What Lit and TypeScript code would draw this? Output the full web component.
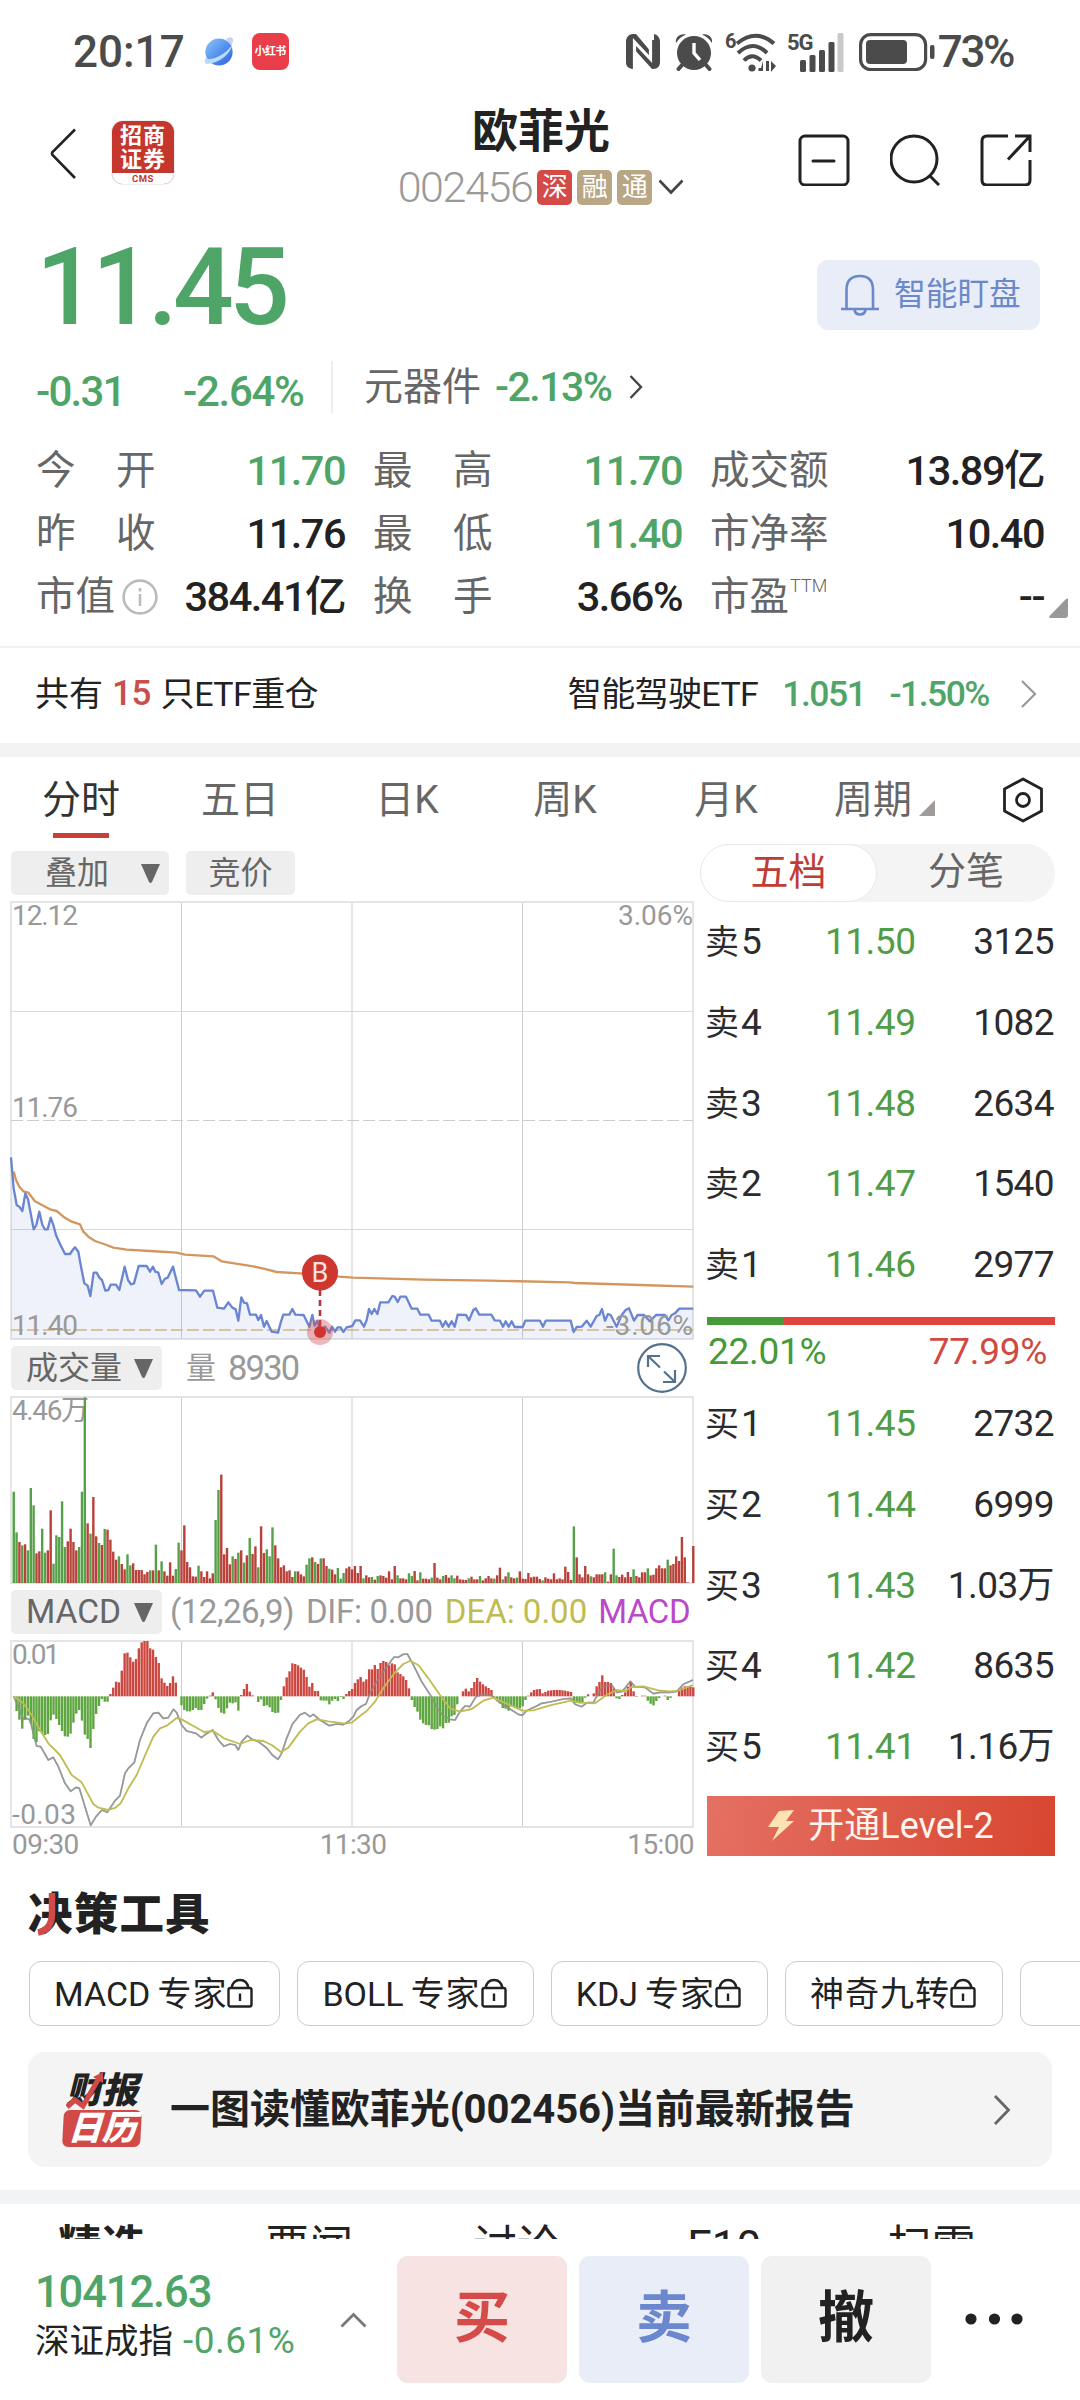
import { LitElement, html, css, svg } from "lit";
import { customElement } from "lit/decorators.js";

/* ---------- chart data (units of 1/3 px, one entry per minute) ---------- */

// positive = rising minute (red), negative = falling minute (green)
const VOLUME = [
  -274, -152, 123, -113, 116, -98, -285, -233, 89, 95, -163, -91, 98, 218, -58, -143, -138, -245, -108, 125,
  163, 123, 98, -108, -274, -557, 179, -148, 258, 140, -120, 114, -162, 160, 130, 94, 70, -80, 57, 41,
  -86, -53, 59, 39, 39, 39, 26, 33, -38, 38, -115, 38, -65, 35, 22, 62, 22, -42, -121, 98,
  173, 63, 47, 20, 19, -52, 35, 18, 35, 14, 29, -189, -279, 325, 86, 105, 56, -80, 72, -91,
  98, -61, 83, -135, 87, 110, -47, 170, 90, -101, -80, -167, 113, 74, 47, 53, 35, 38, 18, -35,
  35, 26, 20, -55, -74, 77, -63, 57, -74, 74, 51, -43, 40, 26, -45, -13, -30, 44, 49, 41,
  51, 30, 51, -14, 23, 17, -18, 10, -21, 23, 21, 16, 35, 11, 51, -23, 14, 14, 11, -29,
  -21, 36, 8, -32, 13, 13, 11, -16, 60, 16, 11, -21, 24, 16, -23, -14, 22, 11, 10, 9,
  -14, 19, 11, 11, -21, 8, 14, 21, 14, -13, 23, 46, -11, 20, -32, 17, 14, -16, 35, 13,
  12, 30, 17, 19, 19, 12, -8, 17, 13, 11, 29, 11, 14, 11, 49, 33, 9, -170, 77, 26,
  17, 51, 26, -20, 17, 26, 26, 26, -32, 4, 26, -103, -23, 18, 25, 17, 33, 18, -41, 21,
  17, 32, 32, -44, 23, 25, 44, 53, 44, 44, -70, 53, 57, 80, 66, 138, 77, 2, 0, 111,
];

const HISTOGRAM = [
  0, -44, -70, -97, -70, -58, -82, -128, -137, -105, -112, -116, -113, -72, -55, -68, -86, -104, -120, -121,
  -112, -79, -52, -41, -73, -115, -128, -155, -98, -53, -29, -8, -16, -16, 7, 26, 44, 42, 77, 129,
  131, 117, 104, 112, 144, 162, 166, 166, 144, 140, 118, 100, 54, 41, 31, 40, 60, 41, 0, -27,
  -41, -45, -45, -41, -35, -41, -41, -23, -7, 2, 12, -9, -35, -49, -52, -36, -19, -21, -18, -43,
  4, 22, 37, 14, 3, 0, -17, -9, -29, -27, -33, -47, -50, -49, -11, 30, 57, 75, 99, 97,
  93, 86, 80, 58, 29, 40, 16, 16, -12, -13, -13, -24, -13, -8, -14, -2, -8, 7, 16, 22,
  40, 51, 58, 44, 51, 81, 81, 94, 82, 100, 106, 103, 93, 99, 96, 72, 67, 60, 49, 24,
  -11, -32, -46, -70, -81, -86, -87, -98, -100, -98, -90, -96, -80, -79, -60, -56, -24, 0, 15, 23,
  15, 25, 43, 55, 44, 36, 30, 25, 19, -4, -13, -21, -35, -37, -43, -30, -31, -35, -36, -30,
  -11, 2, 12, 19, 21, 22, 9, 13, 17, 18, 19, 19, 19, 18, 17, 15, 13, -19, -20, -21,
  -20, -4, 6, 0, 9, 30, 43, 63, 43, 43, 40, 24, -6, -8, 4, 12, 29, 43, 15, -2,
  0, 2, 2, -13, -22, -27, -14, -5, 0, 2, -11, -5, 0, 0, 18, 26, 30, 31, 30, 27,
];

const PRICE =
  "33,82 41,175 50,225 58,230 67,243 76,190 84,208 92,250 101,298 109,285 118,245 127,285 135,298 143,298 152,263 160,285 168,315 180,342 195,372 210,372 218,360 225,352 235,365 243,410 253,460 263,467 271,498 281,428 290,428 298,443 306,450 316,482 325,480 332,464 348,464 358,480 374,410 384,450 393,463 402,460 416,408 440,408 450,425 459,410 466,425 475,428 485,462 494,447 503,443 519,410 537,480 588,481 600,500 613,482 639,482 652,533 672,536 685,517 697,533 707,538 715,572 724,502 732,518 741,520 750,554 768,554 775,570 783,555 792,590 800,573 815,605 834,608 843,575 850,554 868,554 877,537 886,554 911,555 928,590 937,555 944,587 952,573 960,600 975,590 988,608 996,590 1005,605 1013,592 1022,592 1030,606 1040,592 1057,588 1066,571 1080,571 1092,590 1100,570 1107,537 1115,552 1123,537 1132,552 1141,517 1165,517 1177,498 1184,500 1193,516 1201,500 1218,500 1235,536 1252,536 1261,554 1286,554 1295,572 1320,572 1328,590 1337,574 1346,590 1355,574 1364,590 1373,554 1398,555 1407,571 1420,540 1427,535 1438,554 1474,554 1484,571 1500,572 1509,590 1517,574 1526,590 1535,574 1544,591 1568,591 1576,572 1620,572 1629,590 1637,572 1712,572 1721,606 1730,591 1745,590 1760,572 1772,590 1790,558 1798,555 1806,537 1815,572 1824,552 1832,555 1850,590 1865,555 1877,540 1887,535 1902,572 1913,555 1932,555 1950,574 1968,555 1995,555 2005,571 2015,555 2025,550 2038,536 2080,536";

const AVERAGE =
  "41,125 48,150 58,170 70,184 85,188 105,214 130,227 150,238 170,243 190,260 215,275 240,283 250,305 265,320 285,333 320,345 340,353 380,359 450,363 530,368 555,374 640,379 665,394 760,409 800,418 830,426 900,430 960,436 1060,443 1270,449 1470,452 1710,457 1725,459 1920,465 2080,470";

const DIF =
  "41,949 55,980 70,1018 80,1015 90,1020 100,1060 110,1098 122,1100 145,1140 160,1132 175,1160 195,1210 212,1234 228,1222 238,1225 255,1280 272,1336 288,1310 306,1290 322,1297 345,1262 360,1247 375,1180 385,1165 403,1147 420,1080 440,1030 460,1000 475,998 490,1015 505,1013 520,988 530,998 545,1035 560,1053 588,1060 604,1073 618,1062 638,1050 655,1080 672,1099 690,1092 706,1095 715,1110 725,1085 742,1067 757,1078 775,1085 800,1104 817,1125 834,1138 845,1120 860,1075 877,1033 900,1004 914,998 930,1010 940,1003 960,1020 988,1037 1010,1032 1030,1034 1047,1023 1060,1010 1070,990 1085,978 1098,972 1110,940 1130,905 1150,875 1175,840 1183,831 1195,832 1210,823 1222,822 1235,845 1265,905 1294,950 1312,985 1330,1008 1350,1018 1365,1020 1380,995 1395,978 1410,980 1428,950 1445,944 1475,946 1490,960 1510,975 1535,990 1555,1003 1567,1006 1580,992 1610,978 1625,970 1650,966 1690,957 1713,955 1725,973 1745,980 1762,968 1780,968 1795,940 1806,921 1835,915 1850,937 1865,935 1875,925 1891,904 1905,920 1935,922 1960,941 1980,937 2010,937 2030,934 2050,913 2079,900";

const DEA =
  "41,949 70,970 95,1005 120,1050 145,1090 180,1125 215,1185 245,1207 260,1235 280,1272 295,1283 325,1290 345,1284 362,1270 385,1225 410,1185 440,1115 460,1070 480,1045 500,1037 530,1014 545,1018 580,1038 612,1056 640,1053 672,1075 720,1092 752,1080 790,1083 815,1095 843,1116 865,1103 900,1055 925,1030 950,1018 985,1024 1035,1031 1055,1028 1075,1012 1100,993 1125,965 1150,925 1185,877 1210,852 1230,843 1255,855 1285,895 1320,945 1350,985 1380,995 1415,987 1450,962 1480,953 1520,971 1567,992 1600,991 1650,976 1713,962 1740,968 1785,970 1820,945 1850,930 1875,934 1895,921 1930,919 1975,931 2010,934 2035,932 2079,915";

const STEP = 8.53;

const bars = (data: number[], base: number, signedAxis: boolean, red: string, green: string) =>
  data.map((v, i) => {
    const h = Math.abs(v);
    const y = signedAxis && v < 0 ? base : base - h;
    return svg`<rect x=${37.6 + STEP * i} y=${y} width="7.2" height=${h} fill=${v < 0 ? green : red}></rect>`;
  });

const FONT = css`"Roboto", "Noto Sans CJK SC", sans-serif`;

/* ---------- status bar ---------- */

@customElement("status-bar")
class StatusBar extends LitElement {
  static styles = css`
    :host {
      display: flex;
      align-items: center;
      height: 103px;
      box-sizing: border-box;
      padding: 0 67px 0 73px;
      font: 500 44px/44px ${FONT};
      color: #4b4b4b;
    }
    svg { display: block; flex: none; }
    .globe { margin-left: 19px; }
    .app {
      margin-left: 18px;
      width: 37px;
      height: 37px;
      border-radius: 8px;
      background: #e93e49;
      color: #fff;
      font: 700 11px/37px ${FONT};
      letter-spacing: -0.6px;
      text-align: center;
    }
    .grow { flex: 1; }
    .alarm { margin-left: 15px; }
    .wifi { margin-left: 12px; }
    .signal { margin-left: 10px; }
    .battery { margin-left: 14px; }
    .level { margin-left: 3px; letter-spacing: -2.4px; }
    .tiny { font: 700 20px ${FONT}; fill: #4b4b4b; }
    .net { font: 700 22px ${FONT}; fill: #4b4b4b; letter-spacing: -1px; }
  `;
  render() {
    return html`
      <span>20:17</span>
      <svg class="globe" width="30" height="32" viewBox="0 0 30 32">
        <defs>
          <linearGradient id="g" x1="0" y1="0" x2="1" y2="1">
            <stop offset="0" stop-color="#8fc6f8" /><stop offset=".5" stop-color="#5593ee" /><stop offset="1" stop-color="#2e62dc" />
          </linearGradient>
        </defs>
        <path d="M22 3C26 0 30 1 29 5L27 12Z" fill="#c9d4f2" />
        <circle cx="15" cy="16" r="13.6" fill="url(#g)" />
        <path d="M28 9C27 17 16 27 3 28C0 28 0 24 2 21C2 26 19 22 28 9Z" fill="#b9dcfb" />
      </svg>
      <span class="app">小红书</span>
      <span class="grow"></span>
      <svg width="34" height="36" viewBox="0 0 34 36">
        <path d="M7 0H10L26 19V6H28V0C32 1 34 4 34 8V28C34 32 32 35 27 35H26L8 15V35H6C2 34 0 32 0 28V8C0 3 3 0 7 0Z" fill="#4b4b4b" />
        <path d="M8.5 35V8L24.500 25V1" fill="none" stroke="#fff" stroke-width="3.200" />
      </svg>
      <svg class="alarm" width="38" height="38" viewBox="0 0 38 38">
        <circle cx="19" cy="20" r="17" fill="#4b4b4b" />
        <path d="M7 32L3.500 36M31 32L34.500 36" stroke="#4b4b4b" stroke-width="4" stroke-linecap="round" />
        <path d="M1 10C0 4 5 0 11 1.500C7 3 3.500 6 1 10ZM37 10C38 4 33 0 27 1.500C31 3 34.500 6 37 10Z" fill="#4b4b4b" />
        <path d="M19 10V20L25 27" fill="none" stroke="#fff" stroke-width="3.400" />
      </svg>
      <svg class="wifi" width="52" height="42" viewBox="0 0 52 42">
        <text class="tiny" x="0" y="17">6</text>
        <g fill="none" stroke="#4b4b4b" stroke-width="4">
          <path d="M12 12.500Q31 -3 49 12.500" /><path d="M13 22Q28 8 42 22" /><path d="M19 29.500Q27 21 36 29.500" />
        </g>
        <circle cx="27" cy="37" r="3.600" fill="#4b4b4b" />
        <path d="M38 30V40H33.500V37H36ZM44 30V40H41V30ZM46 30L51 35L46 41Z" fill="#4b4b4b" />
      </svg>
      <svg class="signal" width="58" height="42" viewBox="0 0 58 42">
        <text class="net" x="0" y="19">5G</text>
        <g fill="#4b4b4b">
          <rect x="13" y="29" width="6" height="12" rx="1.500" /><rect x="22.500" y="24" width="6" height="17" rx="1.500" />
          <rect x="32" y="19" width="6" height="22" rx="1.500" /><rect x="41.500" y="11" width="6" height="30" rx="1.500" />
        </g>
        <rect x="50.500" y="2" width="6" height="39" rx="1.500" fill="#c9c9c9" />
      </svg>
      <svg class="battery" width="76" height="38" viewBox="0 0 76 38">
        <rect x="1.600" y="1.600" width="65" height="35" rx="10" fill="none" stroke="#4b4b4b" stroke-width="3.200" />
        <rect x="7" y="7" width="41" height="24" rx="4" fill="#4b4b4b" />
        <rect x="71" y="12" width="4.500" height="14" rx="2" fill="#4b4b4b" />
      </svg>
      <span class="level">73%</span>
    `;
  }
}

/* ---------- title bar ---------- */

@customElement("title-bar")
class TitleBar extends LitElement {
  static styles = css`
    :host {
      display: grid;
      grid-template-columns: 1fr auto 1fr;
      height: 122px;
      box-sizing: border-box;
      padding: 0 48px 0 50px;
      font-family: ${FONT};
    }
    svg { display: block; flex: none; }
    .left { display: flex; gap: 36px; padding-top: 18px; align-items: flex-start; }
    .back { margin-top: 7px; }
    .logo {
      width: 62px;
      height: 63px;
      border-radius: 11px;
      overflow: hidden;
      background: #c5362d;
      color: #fff;
      font: 700 22px/24px ${FONT};
      letter-spacing: 1px;
      text-align: center;
      display: flex;
      flex-direction: column;
      justify-content: space-between;
      box-shadow: 0 0 0 1px #eee;
    }
    .logo-name { padding-top: 3px; }
    .cms { background: #fff; color: #c5362d; font: 700 9.500px/11px ${FONT}; letter-spacing: 0.5px; }
    .mid { display: flex; flex-direction: column; align-items: center; }
    .name { margin-top: 5px; font-size: 46px; line-height: 46px; font-weight: 700; color: #222; }
    .sub { display: flex; align-items: center; margin-top: 14px; height: 38px; }
    .code { font-size: 43px; line-height: 43px; color: #999; letter-spacing: -1.400px; margin-right: 5px; font-weight: 300; }
    .tag {
      width: 35px;
      height: 35px;
      margin-right: 5px;
      border-radius: 5px;
      background: #b9a684;
      color: #fff;
      font-size: 26px;
      line-height: 34px;
      text-align: center;
    }
    .tag.red { background: #d44a48; }
    .caret { margin-left: 1px; }
    .right { display: flex; justify-content: flex-end; gap: 40px; padding-top: 31px; }
  `;
  render() {
    return html`
      <div class="left">
        <svg class="back" width="26" height="52" viewBox="0 0 26 52"><path d="M25 1.500L2.500 24Q1.500 25.500 2.500 27L25 50" fill="none" stroke="#222" stroke-width="2.600" /></svg>
        <div class="logo"><div class="logo-name">招商<br />证券</div><div class="cms">CMS</div></div>
      </div>
      <div class="mid">
        <div class="name">欧菲光</div>
        <div class="sub">
          <span class="code">002456</span><span class="tag red">深</span><span class="tag">融</span><span class="tag">通</span>
          <svg class="caret" width="26" height="16" viewBox="0 0 26 16"><path d="M1.500 1.500L13 13.500L24.500 1.500" fill="none" stroke="#444" stroke-width="2.600" /></svg>
        </div>
      </div>
      <div class="right">
        <svg width="52" height="52" viewBox="0 0 52 52" fill="none" stroke="#222" stroke-width="3">
          <rect x="2" y="2" width="48" height="49" rx="5" /><path d="M15 27H36" stroke-linecap="round" />
        </svg>
        <svg width="50" height="52" viewBox="0 0 50 52" fill="none" stroke="#222" stroke-width="3">
          <circle cx="24" cy="25" r="23" /><path d="M40 42L49 51" />
        </svg>
        <svg width="52" height="52" viewBox="0 0 52 52" fill="none" stroke="#222" stroke-width="3">
          <path d="M28 2H7Q2 2 2 7V46Q2 51 7 51H45Q50 51 50 46V26" /><path d="M35 2H50V18M49 3L28 25.500" />
        </svg>
      </div>
    `;
  }
}

/* ---------- quote summary ---------- */

@customElement("quote-summary")
class QuoteSummary extends LitElement {
  static styles = css`
    :host { display: block; height: 421px; font-family: ${FONT}; color: #222; }
    svg { display: block; flex: none; }
    .top { display: flex; justify-content: space-between; height: 121px; padding: 0 40px 0 36px; }
    .price { margin-top: 9px; font-size: 107px; line-height: 107px; font-weight: 500; color: #4fa568; letter-spacing: -4.800px; }
    .watch {
      display: flex;
      align-items: center;
      width: 223px;
      height: 70px;
      margin-top: 35px;
      box-sizing: border-box;
      padding-left: 23px;
      gap: 14px;
      border-radius: 11px;
      background: #e8edf8;
      color: #6b88ca;
      font-size: 31.700px;
      line-height: 40px;
    }
    .changes { display: flex; align-items: center; height: 82px; padding-left: 36px; font-size: 42px; line-height: 42px; }
    .green { color: #4fa568; }
    .num { font-weight: 500; }
    .diff { width: 147px; letter-spacing: -1.800px; padding-top: 9px; }
    .pct { width: 148px; letter-spacing: -1.300px; padding-top: 9px; }
    .sector { border-left: 2px solid #eee; padding-left: 31px; height: 52px; line-height: 48px; color: #666; font-size: 39px; display: flex; align-items: center; }
    .sector .num { font-size: 41px; letter-spacing: -1.500px; margin: 0 18px 0 14px; color: #4fa568; }
    .grid {
      display: grid;
      grid-template-columns: 309px 309px 334px;
      column-gap: 28px;
      grid-auto-rows: 63px;
      padding-left: 36px;
      margin-top: 11px;
      position: relative;
    }
    .cell { display: flex; justify-content: space-between; align-items: center; white-space: nowrap; font-size: 41.500px; line-height: 63px; }
    .label { color: #666; font-size: 39.500px; display: flex; align-items: center; }
    .wide { letter-spacing: 40.500px; }
    .cell .num { letter-spacing: -1.500px; }
    .info { margin-left: 7px; }
    .ttm { font-size: 18px; line-height: 18px; margin: -22px 0 0 1px; font-weight: 300; }
    .corner { position: absolute; right: 12px; bottom: 10px; }
  `;
  private cell(label: string, value: string, opts: { wide?: boolean; green?: boolean; info?: boolean; ttm?: boolean } = {}) {
    return html`<div class="cell">
      <span class="label ${opts.wide ? "wide" : ""}">${label}${opts.info
        ? html`<svg class="info" width="36" height="36" viewBox="0 0 36 36" fill="none" stroke="#bbb" stroke-width="2.600"><circle cx="18" cy="18" r="16.400" /><path d="M18 15V27M18 9V12.500" /></svg>`
        : ""}${opts.ttm ? html`<span class="ttm">TTM</span>` : ""}</span>
      <span class="num ${opts.green ? "green" : ""}">${value}</span>
    </div>`;
  }
  render() {
    return html`
      <div class="top">
        <div class="price">11.45</div>
        <div class="watch">
          <svg width="40" height="42" viewBox="0 0 40 42" fill="none" stroke="#6b88ca" stroke-width="2.600">
            <path d="M1 35H39M6.500 35V16Q6.500 2 20 2Q33 2 33 16V35" /><path d="M14.500 35.500Q15 40.500 20 40.500Q25 40.500 25.500 35.500" />
          </svg>
          智能盯盘
        </div>
      </div>
      <div class="changes">
        <span class="num green diff">-0.31</span><span class="num green pct">-2.64%</span>
        <span class="sector">元器件<span class="num">-2.13%</span>
          <svg width="14" height="26" viewBox="0 0 14 26"><path d="M1.500 2L12 13L1.500 24" fill="none" stroke="#444" stroke-width="2.400" /></svg>
        </span>
      </div>
      <div class="grid">
        ${this.cell("今开", "11.70", { wide: true, green: true })}
        ${this.cell("最高", "11.70", { wide: true, green: true })}
        ${this.cell("成交额", "13.89亿")}
        ${this.cell("昨收", "11.76", { wide: true })}
        ${this.cell("最低", "11.40", { wide: true, green: true })}
        ${this.cell("市净率", "10.40")}
        ${this.cell("市值", "384.41亿", { info: true })}
        ${this.cell("换手", "3.66%", { wide: true })}
        ${this.cell("市盈", "--", { ttm: true })}
        <svg class="corner" width="19" height="20" viewBox="0 0 19 20"><path d="M19 1V17Q19 20 16 20H1Q-.5 19 1 17.500L17 1Q19 0 19 1Z" fill="#999" /></svg>
      </div>
    `;
  }
}

/* ---------- ETF strip ---------- */

@customElement("etf-strip")
class EtfStrip extends LitElement {
  static styles = css`
    :host {
      display: flex;
      align-items: center;
      height: 97px;
      box-sizing: border-box;
      padding: 0 43px 4px 35px;
      border-top: 2px solid #f0f1f3;
      font: 400 34px/40px ${FONT};
      color: #222;
      white-space: nowrap;
    }
    .count { color: #c94f4b; font-weight: 500; font-size: 35px; margin: 0 10px 0 9px; letter-spacing: -0.500px; }
    .etf { letter-spacing: -0.600px; }
    .right { display: flex; margin-left: auto; align-items: center; }
    .val { color: #4fa568; font-weight: 500; font-size: 35.500px; letter-spacing: -1.500px; margin-left: 24px; }
    svg { margin-left: 31px; }
  `;
  render() {
    return html`
      <span>共有</span><span class="count">15</span><span class="etf">只ETF重仓</span>
      <span class="right">
        <span class="etf">智能驾驶ETF</span><span class="val">1.051</span><span class="val">-1.50%</span>
        <svg width="17" height="30" viewBox="0 0 17 30"><path d="M2 2L15 15L2 28" fill="none" stroke="#999" stroke-width="2.200" /></svg>
      </span>
    `;
  }
}

/* ---------- period tabs ---------- */

@customElement("period-tabs")
class PeriodTabs extends LitElement {
  static styles = css`
    :host {
      display: grid;
      grid-template-columns: 162px 156px 178px 138px 184px 126px 1fr;
      height: 86px;
      font: 400 39px/86px ${FONT};
      color: #666;
    }
    .tab { text-align: center; height: 86px; }
    .tab.on { color: #333; display: flex; flex-direction: column; align-items: center; }
    .tab.on::after { content: ""; width: 56px; height: 5px; margin-top: -10px; background: #c9403b; }
    .more { display: flex; align-items: center; padding-left: 16px; }
    .more svg { margin: 16px 0 0 7px; }
    .gear { display: flex; align-items: center; justify-content: flex-end; padding-right: 36px; }
  `;
  render() {
    return html`
      <div class="tab on">分时</div>
      <div class="tab">五日</div>
      <div class="tab">日K</div>
      <div class="tab">周K</div>
      <div class="tab">月K</div>
      <div class="more">周期<svg width="16" height="16" viewBox="0 0 16 16"><path d="M16 0V16H0Z" fill="#a09a98" /></svg></div>
      <div class="gear">
        <svg width="42" height="46" viewBox="0 0 42 46" fill="none" stroke="#222" stroke-width="2.800" stroke-linejoin="round">
          <path d="M21 2L39.500 12V34L21 44L2.500 34V12Z" /><circle cx="21" cy="23" r="6.500" />
        </svg>
      </div>
    `;
  }
}

/* ---------- intraday charts ---------- */

@customElement("intraday-charts")
class IntradayCharts extends LitElement {
  static styles = css`
    :host { display: block; font-family: ${FONT}; }
    svg { display: block; flex: none; }
    .bar { display: flex; align-items: center; height: 44px; margin-left: 1px; font-size: 33px; line-height: 44px; color: #999; white-space: nowrap; }
    .btn { display: flex; align-items: center; height: 44px; box-sizing: border-box; background: #eee; border-radius: 5px; color: #666; font-size: 32px; }
    .btn.overlay { width: 158px; padding: 0 9px 0 34px; justify-content: space-between; }
    .btn.auction { width: 109px; justify-content: center; margin-left: 17px; }
    .btn.pick { width: 151px; padding: 0 9px 0 15px; justify-content: space-between; }
    .btn.macd { font-size: 33.500px; }
    .first { margin-top: 8px; }
    .plot { margin: 6px 0; }
    .vol { margin-left: 24px; font-size: 30px; }
    .volnum { margin-left: 12px; font-size: 34.500px; letter-spacing: -1.800px; }
    .expand { margin-left: auto; margin-right: 8px; }
    .params { margin-left: 8px; letter-spacing: -0.500px; }
    .dif { margin-left: 12px; letter-spacing: -0.300px; }
    .dea { margin-left: 12px; color: #bfbb50; letter-spacing: 0; }
    .m { margin-left: 11px; color: #b949c9; letter-spacing: -0.400px; }
    .axis { font-size: 28px; fill: #999; }
    .times { display: flex; justify-content: space-between; margin: -4px 1px 0 2px; font-size: 28px; line-height: 30px; letter-spacing: -0.600px; color: #999; }
  `;
  private caret() {
    return html`<svg width="19" height="19" viewBox="0 0 19 19"><path d="M0 0H19L11 18Q9.500 20 8 18Z" fill="#666" /></svg>`;
  }
  private frame(top: number, bottom: number) {
    return svg`<path d="M181.500 ${top}V${bottom}M522.500 ${top}V${bottom}" stroke="#ccc" stroke-width="1" fill="none"></path>
      <path d="M352 ${top}V${bottom}M11 ${top}H693V${bottom}H11Z" stroke="#e4e4e4" stroke-width="1.800" fill="none"></path>`;
  }
  render() {
    return html`
      <div class="bar first"><span class="btn overlay">叠加${this.caret()}</span><span class="btn auction">竞价</span></div>
      <svg class="plot" width="685" height="439" viewBox="10 901 685 439" overflow="visible">
        ${this.frame(902, 1339)}
        <path d="M11 1011.500H693M11 1229.500H693" stroke="#d8d8d8" stroke-width="1.200" />
        <path d="M11 1120.500H693" stroke="#ccc" stroke-width="1.200" stroke-dasharray="12 4" />
        <g transform="translate(0 1130) scale(.33333)" fill="none" stroke-linejoin="round">
          <polygon points="33,627 ${PRICE} 2080,627" fill="#6d87d0" fill-opacity=".11" />
          <path d="M33 600H2080" stroke="#d2b580" stroke-width="5" stroke-dasharray="36 12" />
          <polyline points=${AVERAGE} stroke="#d3965f" stroke-width="7" />
          <polyline points=${PRICE} stroke="#6a85d1" stroke-width="7" />
        </g>
        <text class="axis" x="12" y="925" textLength="66">12.12</text>
        <text class="axis" x="618" y="925" textLength="75">3.06%</text>
        <text class="axis" x="12" y="1117" textLength="66">11.76</text>
        <text class="axis" x="12" y="1335" textLength="66">11.40</text>
        <text class="axis" x="606" y="1335" textLength="87">-3.06%</text>
        <path d="M320 1290V1330" stroke="#b8353a" stroke-width="2.600" stroke-dasharray="6 4" />
        <circle cx="320" cy="1332" r="13" fill="#d84a50" fill-opacity=".4" />
        <circle cx="320" cy="1332" r="6" fill="#cf3430" />
        <circle cx="320" cy="1272.500" r="18" fill="#ce3630" />
        <text x="320" y="1281.500" text-anchor="middle" font-size="27" fill="#fbe3e1">B</text>
      </svg>
      <div class="bar">
        <span class="btn pick">成交量${this.caret()}</span><span class="vol">量</span><span class="volnum">8930</span>
        <svg class="expand" width="50" height="50" viewBox="0 0 50 50" fill="none" stroke="#54708f" stroke-width="2.200">
          <circle cx="25" cy="25" r="23.800" /><path d="M11 24V13H23M11.500 13.500L23 24.500M38 27V39H26M37.500 38.500L27 28.500" />
        </svg>
      </div>
      <svg class="plot" width="685" height="188" viewBox="10 1396 685 188" overflow="visible">
        ${this.frame(1397, 1583)}
        <text class="axis" x="12" y="1419.500" textLength="77">4.46万</text>
        <g transform="translate(0 1380) scale(.33333)">${bars(VOLUME, 609, false, "#b8413a", "#55a048")}</g>
      </svg>
      <div class="bar">
        <span class="btn pick macd">MACD${this.caret()}</span><span class="params">(12,26,9)</span><span class="dif">DIF: 0.00</span><span class="dea">DEA: 0.00</span><span class="m">MACD</span>
      </div>
      <svg class="plot" width="685" height="188" viewBox="10 1640 685 188" overflow="visible">
        ${this.frame(1641, 1827)}
        <g transform="translate(0 1380) scale(.33333)" fill="none" stroke-linejoin="round">
          <polyline points=${DIF} stroke="#98999b" stroke-width="5" />
          ${bars(HISTOGRAM, 949, true, "#cc4740", "#5ea63f")}
          <polyline points=${DIF} stroke="#98999b" stroke-width="5" stroke-opacity=".55" />
          <polyline points=${DEA} stroke="#c0bc52" stroke-width="5.500" />
        </g>
        <text class="axis" x="12" y="1664" textLength="48">0.01</text>
        <text class="axis" x="12" y="1824" textLength="64">-0.03</text>
      </svg>
      <div class="times"><span>09:30</span><span>11:30</span><span>15:00</span></div>
    `;
  }
}

/* ---------- order book ---------- */

@customElement("order-book")
class OrderBook extends LitElement {
  static styles = css`
    :host { display: block; width: 355px; font-family: ${FONT}; color: #2b2b2e; }
    .switch { display: flex; height: 58px; margin-top: 1px; border-radius: 29px; background: #f4f4f4; font-size: 38px; line-height: 54px; text-align: center; color: #666; }
    .on { width: 177px; box-sizing: border-box; border: 1.500px solid #e8e8e8; border-radius: 29px; background: #fff; color: #bf3d36; }
    .off { flex: 1; }
    .row { display: grid; grid-template-columns: 120px 1fr auto; height: 80.800px; padding: 0 1px 0 5px; font-size: 37px; line-height: 80.800px; }
    .side { font-size: 34px; }
    .lv { font-size: 37px; margin-left: 2px; }
    .px { color: #4f9d46; letter-spacing: -0.500px; }
    .qty { letter-spacing: -0.600px; }
    .ratio { display: flex; height: 8px; margin: 11px 0 0 7px; background: #e0453d; }
    .ratio-sell { background: #469a38; }
    .pcts { display: flex; justify-content: space-between; height: 59px; padding: 0 8px 0 8px; font-size: 37px; line-height: 53px; letter-spacing: -0.300px; }
    .g { color: #469a38; }
    .r { color: #d04a42; }
    .cta {
      display: flex;
      align-items: center;
      justify-content: center;
      gap: 13px;
      height: 60px;
      margin: 8px 0 0 7px;
      background: linear-gradient(100deg, #e47063, #d84631);
      color: #fff3ee;
      font-size: 36px;
      line-height: 60px;
    }
  `;
  private row([side, lv, px, qty]: string[]) {
    return html`<div class="row"><span><span class="side">${side}</span><span class="lv">${lv}</span></span><span class="px">${px}</span><span class="qty">${qty}</span></div>`;
  }
  render() {
    const asks = [["卖", "5", "11.50", "3125"], ["卖", "4", "11.49", "1082"], ["卖", "3", "11.48", "2634"], ["卖", "2", "11.47", "1540"], ["卖", "1", "11.46", "2977"]];
    const bids = [["买", "1", "11.45", "2732"], ["买", "2", "11.44", "6999"], ["买", "3", "11.43", "1.03万"], ["买", "4", "11.42", "8635"], ["买", "5", "11.41", "1.16万"]];
    return html`
      <div class="switch"><span class="on">五档</span><span class="off">分笔</span></div>
      ${asks.map((r) => this.row(r))}
      <div class="ratio"><span class="ratio-sell" style="width:22.01%"></span></div>
      <div class="pcts"><span class="g">22.01%</span><span class="r">77.99%</span></div>
      ${bids.map((r) => this.row(r))}
      <div class="cta">
        <svg width="27" height="31" viewBox="0 0 27 31"><path d="M11 1L26 0L18 11H26L4 31L11 17H0Z" fill="#fbe3b4" /></svg>
        开通Level-2
      </div>
    `;
  }
}

/* ---------- tools ---------- */

@customElement("decision-tools")
class DecisionTools extends LitElement {
  static styles = css`
    :host { display: block; height: 332px; font-family: ${FONT}; color: #222; overflow: hidden; }
    svg { display: block; flex: none; }
    .title { position: relative; width: 190px; margin: 31px 0 0 28px; font-size: 44.500px; line-height: 52px; font-weight: 900; letter-spacing: 1.200px; white-space: nowrap; }
    .swash { position: absolute; left: 8px; top: 4px; }
    .chips { display: flex; gap: 17px; margin: 20px 0 0 29px; width: 1200px; }
    .chip {
      display: flex;
      align-items: center;
      height: 65px;
      box-sizing: border-box;
      border: 1.500px solid #ccc;
      border-radius: 12px;
      padding: 0 0 0 24px;
      font-size: 34px;
      line-height: 60px;
      white-space: nowrap;
    }
    .chip svg { margin-left: auto; margin-right: 26px; margin-bottom: 2px; }
    .zh { margin-left: 7px; letter-spacing: 1px; }
    .first { margin-left: 0; }
    .w1 { width: 267px; }
    .w2 { width: 251px; }
    .w3 { width: 228px; }
    .report { display: flex; align-items: center; height: 115px; margin: 26px 28px 0; border-radius: 17px; background: #f4f4f4; padding: 0 41px 0 34px; box-sizing: border-box; font-size: 40px; font-weight: 700; white-space: nowrap; }
    .badge { position: relative; display: flex; flex-direction: column; align-items: center; width: 80px; margin-right: 28px; font-style: italic; font-weight: 900; }
    .b1 { font-size: 36px; line-height: 37px; }
    .b2 { width: 78px; height: 37px; border-radius: 6px; background: #d24a48; color: #fff; font-size: 34px; line-height: 36px; text-align: center; transform: skewX(-3deg); }
    .arrow { position: absolute; left: 4px; top: -1px; }
    .text { letter-spacing: -0.050px; line-height: 50px; }
    .go { margin-left: auto; }
  `;
  private lock() {
    return html`<svg width="26" height="30" viewBox="0 0 26 30" fill="none" stroke="#222" stroke-width="2.400">
      <rect x="1.500" y="10" width="23" height="18.500" rx="2" /><path d="M4.500 10Q6 2 13 2Q20 2 21.500 10M13 15.500V23" />
    </svg>`;
  }
  render() {
    return html`
      <div class="title">决策工具
        <svg class="swash" width="26" height="44" viewBox="0 0 26 44"><path d="M16 0V20Q16 37 2 39.500" fill="none" stroke="#d24a48" stroke-width="6.500" /></svg>
      </div>
      <div class="chips">
        <div class="chip w1">MACD<span class="zh">专家</span>${this.lock()}</div>
        <div class="chip w2">BOLL<span class="zh">专家</span>${this.lock()}</div>
        <div class="chip w3">KDJ<span class="zh">专家</span>${this.lock()}</div>
        <div class="chip w3"><span class="zh first">神奇九转</span>${this.lock()}</div>
        <div class="chip w3"></div>
      </div>
      <div class="report">
        <div class="badge">
          <span class="b1">财报</span><span class="b2">日历</span>
          <svg class="arrow" width="40" height="38" viewBox="0 0 40 38"><path d="M1 35L9 28L17 34L33 6" fill="none" stroke="#d24a48" stroke-width="5" /><path d="M27 5L37 0L37 11Z" fill="#d24a48" /></svg>
        </div>
        <span class="text">一图读懂欧菲光(002456)当前最新报告</span>
        <svg class="go" width="18" height="32" viewBox="0 0 18 32"><path d="M2 2L15.500 16L2 30" fill="none" stroke="#666" stroke-width="2.800" /></svg>
      </div>
    `;
  }
}

/* ---------- bottom trade bar ---------- */

@customElement("trade-bar")
class TradeBar extends LitElement {
  static styles = css`
    :host { display: flex; height: 161px; background: #fff; font-family: ${FONT}; color: #222; white-space: nowrap; }
    .index { width: 305px; padding: 32px 0 0 35px; box-sizing: border-box; }
    .point { font-size: 43.500px; line-height: 44px; font-weight: 500; color: #4fa568; letter-spacing: -1.100px; }
    .line { display: flex; align-items: center; margin-top: 6px; font-size: 34.500px; line-height: 40px; }
    .pct { color: #4fa568; font-size: 37px; margin-left: 10px; letter-spacing: 0.500px; }
    .up { margin: 73px 30px 0 35px; }
    .btn { width: 170px; height: 127px; margin: 17px 12px 0 0; border-radius: 11px; font-size: 56px; line-height: 125px; font-weight: 700; text-align: center; }
    .buy { background: #f6e3e2; color: #d54b49; }
    .sell { background: #e8edf8; color: #6b88ce; }
    .cancel { background: #f1f1f1; }
    .dots { margin: 74px 0 0 22px; }
    svg { flex: none; }
  `;
  render() {
    return html`
      <div class="index">
        <div class="point">10412.63</div>
        <div class="line">深证成指<span class="pct">-0.61%</span></div>
      </div>
      <svg class="up" width="27" height="16" viewBox="0 0 27 16"><path d="M1.500 14.500L13.500 2.500L25.500 14.500" fill="none" stroke="#777" stroke-width="2.800" /></svg>
      <div class="btn buy">买</div>
      <div class="btn sell">卖</div>
      <div class="btn cancel">撤</div>
      <svg class="dots" width="60" height="12" viewBox="0 0 60 12" fill="#222"><circle cx="6" cy="6" r="5.600" /><circle cx="29.500" cy="6" r="5.600" /><circle cx="52" cy="6" r="5.600" /></svg>
    `;
  }
}

/* ---------- page ---------- */

@customElement("app-root")
class AppRoot extends LitElement {
  static styles = css`
    :host { display: block; width: 1080px; height: 2400px; overflow: hidden; background: #fff; font-family: ${FONT}; }
    .band { height: 14px; background: #f2f3f5; }
    .main { display: grid; grid-template-columns: 685px 355px; column-gap: 5px; margin-left: 10px; height: 1015px; }
    .feed { display: grid; grid-template-columns: repeat(5, 207.500px); height: 35px; margin-left: -2px; overflow: hidden; font-size: 44px; line-height: 86px; text-align: center; color: #222; }
    .sel { font-weight: 700; }
  `;
  render() {
    return html`
      <status-bar></status-bar>
      <title-bar></title-bar>
      <quote-summary></quote-summary>
      <etf-strip></etf-strip>
      <div class="band"></div>
      <period-tabs></period-tabs>
      <div class="main"><intraday-charts></intraday-charts><order-book></order-book></div>
      <decision-tools></decision-tools>
      <div class="band"></div>
      <div class="feed"><span class="sel">精选</span><span>要闻</span><span>讨论</span><span>F10</span><span>扫雷</span></div>
      <trade-bar></trade-bar>
    `;
  }
}
